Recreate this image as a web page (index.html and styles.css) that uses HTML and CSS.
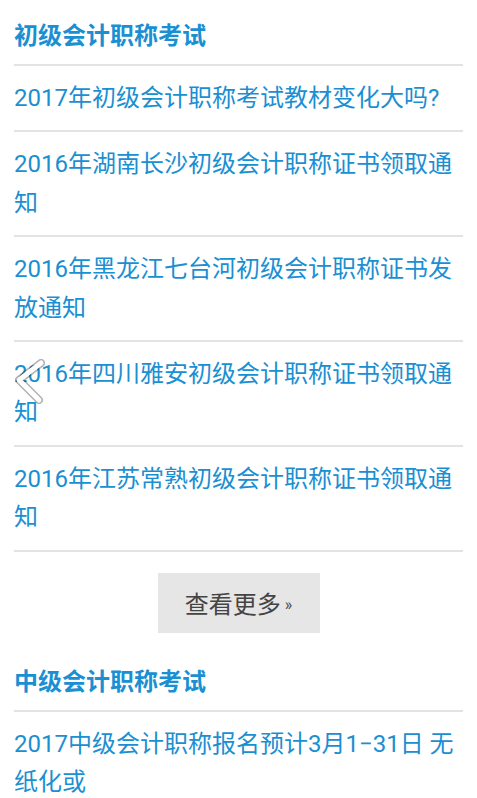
FILE: index.html
```html
<!DOCTYPE html>
<html lang="zh-CN">
<head>
    <meta charset="UTF-8">
    <meta name="viewport" content="width=device-width, initial-scale=1.0">
    <title>会计职称考试</title>
    <link rel="stylesheet" href="styles.css">
</head>
<body>
    <a href="#" class="prev-btn" aria-label="上一页">
        <svg width="36" height="48" viewBox="0 0 36 48">
            <polyline points="29,7 7,24 27,44" fill="none" stroke="rgba(0,0,0,0.3)" stroke-width="8" stroke-linecap="round" stroke-linejoin="round"/>
            <polyline points="29,7 7,24 27,44" fill="none" stroke="#fff" stroke-width="5" stroke-linecap="round" stroke-linejoin="round"/>
        </svg>
    </a>

    <div class="page">
        <section class="news-block">
            <h2 class="block-title">初级会计职称考试</h2>
            <ul class="news-list">
                <li><a href="#">2017年初级会计职称考试教材变化大吗?</a></li>
                <li><a href="#">2016年湖南长沙初级会计职称证书领取通知</a></li>
                <li><a href="#">2016年黑龙江七台河初级会计职称证书发放通知</a></li>
                <li><a href="#">2016年四川雅安初级会计职称证书领取通知</a></li>
                <li><a href="#">2016年江苏常熟初级会计职称证书领取通知</a></li>
            </ul>
            <div class="more">
                <a href="#" class="more-btn">查看更多<span class="arrows">»</span></a>
            </div>
        </section>

        <section class="news-block">
            <h2 class="block-title">中级会计职称考试</h2>
            <ul class="news-list">
                <li><a href="#">2017中级会计职称报名预计3月1−31日 无纸化或</a></li>
            </ul>
        </section>
    </div>
</body>
</html>
```

FILE: styles.css
```css
* {
    margin: 0;
    padding: 0;
    box-sizing: border-box;
}

body {
    font-family: Roboto, "Noto Sans CJK SC", sans-serif;
    background: #fff;
    color: #333;
}

a {
    text-decoration: none;
}

.page {
    padding: 0 14px;
}

.block-title {
    font-size: 24px;
    font-weight: bold;
    line-height: 38px;
    color: #1a8fd2;
    padding: 17px 0 9px;
    border-bottom: 2px solid #e3e3e3;
}

.news-list {
    list-style: none;
}

.news-list li {
    padding: 13px 0;
    border-bottom: 2px solid #e3e3e3;
}

.news-list a {
    display: block;
    font-size: 24px;
    line-height: 38.4px;
    color: #1a8fd2;
}

.more {
    display: flex;
    justify-content: center;
    padding: 21px 0 13px;
}

.more-btn {
    display: flex;
    align-items: center;
    justify-content: center;
    gap: 4px;
    width: 162px;
    height: 60px;
    background: #e6e6e6;
    color: #444;
    font-size: 24px;
}

.more-btn .arrows {
    font-size: 16px;
    padding-top: 4px;
}

.prev-btn {
    position: absolute;
    top: 356px;
    left: 12px;
    display: block;
    width: 36px;
    height: 48px;
}

.prev-btn svg {
    display: block;
    filter: blur(0.4px);
}
```
